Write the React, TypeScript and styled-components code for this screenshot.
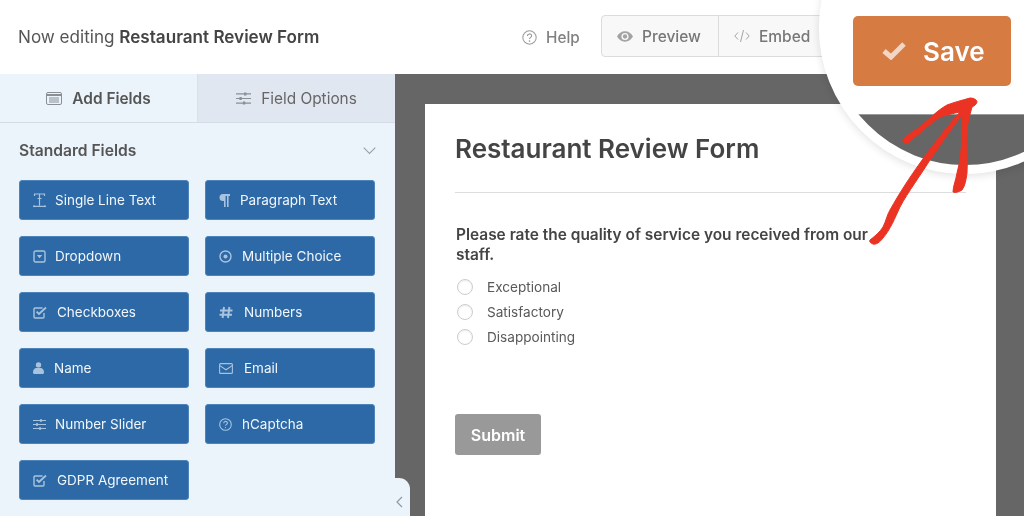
import React from 'react';
import styled, { createGlobalStyle } from 'styled-components';

const Global = createGlobalStyle`
  html, body { margin: 0; padding: 0; background: #fff; }
  body { font-family: Inter, "Liberation Sans", sans-serif; overflow: hidden; }
  * { box-sizing: border-box; }
`;

const Page = styled.div`
  position: relative;
  width: 1024px;
  height: 516px;
  overflow: hidden;
  display: flex;
  flex-direction: column;
  filter: blur(0.35px);
`;
const Header = styled.header`
  height: 74px;
  flex: none;
  background: #fff;
  display: flex;
  align-items: center;
  padding: 0 0 0 18px;
`;
const Title = styled.div`
  font-size: 17.1px;
  color: #555;
  flex: none;
  width: 504px;
  position: relative;
  top: -1px;
  b { font-weight: 600; color: #444; }
`;
const Help = styled.div`
  display: flex;
  align-items: center;
  gap: 9px;
  width: 79px;
  flex: none;
  font-size: 15.3px;
  font-weight: 500;
  color: #808080;
`;
const Segments = styled.div`
  display: flex;
  height: 42px;
  width: 260px;
  flex: none;
  border: 1px solid #dcdcdc;
  border-radius: 4px;
  background: #f8f8f8;
  position: relative;
  top: -1px;
`;
const Segment = styled.div<{ $w: number }>`
  width: ${p => p.$w}px;
  display: flex;
  align-items: center;
  gap: 9px;
  padding-left: 15px;
  font-size: 15.5px;
  font-weight: 500;
  color: #777;
  & + & { border-left: 1px solid #dcdcdc; }
`;
const Body = styled.div`
  flex: 1;
  display: flex;
  min-height: 0;
`;
const Sidebar = styled.aside`
  width: 395px;
  flex: none;
  background: #ebf3fb;
  display: flex;
  flex-direction: column;
`;
const Tabs = styled.div`
  display: flex;
  height: 49px;
  flex: none;
  border-bottom: 1px solid #d5dce6;
`;
const Tab = styled.div<{ $active?: boolean }>`
  flex: 1;
  display: flex;
  align-items: center;
  justify-content: center;
  gap: 10px;
  font-size: 15.4px;
  font-weight: ${p => (p.$active ? 600 : 400)};
  color: ${p => (p.$active ? '#555' : '#666')};
  background: ${p => (p.$active ? '#ebf3fb' : '#e1e7f0')};
  border-left: ${p => (p.$active ? 'none' : '1px solid #d9e0ea')};
`;
const SectionHead = styled.div`
  height: 57px;
  flex: none;
  display: flex;
  align-items: center;
  justify-content: space-between;
  padding: 0 19px 2px 19px;
  font-size: 15.6px;
  font-weight: 600;
  color: #555;
`;
const FieldGrid = styled.div`
  display: grid;
  grid-template-columns: 170px 170px;
  grid-auto-rows: 40px;
  gap: 16px;
  padding-left: 19px;
`;
const FieldButton = styled.div<{ $start: number }>`
  display: flex;
  align-items: center;
  padding-left: 13px;
  background: #2c69a6;
  border: 1px solid #4f84ba;
  border-radius: 3px;
  color: #f1f6fb;
  font-size: 13.5px;
  span.ic {
    width: ${p => p.$start - 14}px;
    flex: none;
    display: flex;
    align-items: center;
    color: #a9c3de;
  }
`;
const Canvas = styled.main`
  flex: 1;
  background: #666;
  padding: 30px 28px 0 30px;
  min-width: 0;
`;
const Form = styled.div`
  height: 100%;
  background: #fff;
  padding-left: 30px;
  display: flex;
  flex-direction: column;
`;
const FormTitle = styled.h1`
  margin: 0;
  height: 89px;
  flex: none;
  width: 511px;
  display: flex;
  align-items: center;
  font-size: 26px;
  font-weight: 600;
  color: #444;
  border-bottom: 1px solid #ddd;
`;
const Question = styled.div`
  margin: 32px 0 0 1px;
  width: 425px;
  font-size: 15.45px;
  line-height: 20px;
  font-weight: 600;
  color: #444;
`;
const Choices = styled.div`
  margin: 14px 0 0 2px;
  display: flex;
  flex-direction: column;
  gap: 9px;
`;
const Choice = styled.div`
  height: 16px;
  display: flex;
  align-items: center;
  gap: 14px;
  font-size: 13.6px;
  color: #595959;
`;
const Radio = styled.i`
  width: 16px;
  height: 16px;
  border-radius: 50%;
  background: #fff;
  border: 1px solid #cdcdcd;
  box-shadow: inset 0 1px 2px rgba(0, 0, 0, 0.08);
  flex: none;
`;
const Submit = styled.div`
  margin-top: 69px;
  width: 86px;
  height: 41px;
  display: flex;
  align-items: center;
  justify-content: center;
  background: #999;
  border-radius: 3px;
  color: #fff;
  font-size: 16px;
  font-weight: 600;
`;
const Collapse = styled.div`
  position: absolute;
  left: 395px;
  top: 478px;
  width: 15px;
  height: 38px;
  background: #ebf3fb;
  border-top-right-radius: 11px;
  display: flex;
  align-items: flex-end;
  padding: 0 0 8px 1px;
`;
const Lens = styled.div`
  position: absolute;
  left: 819px;
  top: -118px;
  width: 292px;
  height: 292px;
  border-radius: 50%;
  border: 9px solid #fff;
  background: linear-gradient(#fff 0, #fff 223px, #cfcfcf 223px, #666 224px, #666 100%);
  box-shadow: 0 2px 9px rgba(0, 0, 0, 0.12);
`;
const SaveButton = styled.div`
  position: absolute;
  left: 853px;
  top: 16px;
  width: 158px;
  height: 70px;
  background: #d67b42;
  border-radius: 5px;
  display: flex;
  align-items: center;
  gap: 17px;
  padding-left: 29px;
  color: #fff;
  font-size: 26px;
  font-weight: 600;
`;
const Arrow = styled.svg`
  position: absolute;
  left: 860px;
  top: 90px;
  pointer-events: none;
`;

const Sl = (p: React.SVGProps<SVGSVGElement>) => (
  <svg fill="none" stroke="currentColor" strokeWidth={1.4} {...p} />
);

const icons: Record<string, React.ReactNode> = {
  text: (
    <Sl width="13" height="15" viewBox="0 0 13 15">
      <path d="M1.500 3V1h10v2M6.500 1v11.500M4.500 5.500h4M1 13.300h11" strokeWidth={1.2} />
      <circle cx="1" cy="13.300" r="1" fill="currentColor" stroke="none" />
      <circle cx="12" cy="13.300" r="1" fill="currentColor" stroke="none" />
    </Sl>
  ),
  para: (
    <svg width="11" height="13" viewBox="0 0 11 13" fill="currentColor">
      <path d="M4 0h7v2H9.600v11H8V2H6.600v11H5V7H4a3.500 3.500 0 0 1 0-7z" />
    </svg>
  ),
  drop: (
    <Sl width="13" height="13" viewBox="0 0 13 13">
      <rect x="1" y="1" width="11" height="11" rx="1.500" />
      <path d="M3.800 5h5.400L6.500 8.200z" fill="currentColor" stroke="none" />
    </Sl>
  ),
  radio: (
    <Sl width="13" height="13" viewBox="0 0 13 13">
      <circle cx="6.500" cy="6.500" r="5.500" />
      <circle cx="6.500" cy="6.500" r="2" fill="currentColor" stroke="none" />
    </Sl>
  ),
  check: (
    <Sl width="14" height="13" viewBox="0 0 14 13">
      <path d="M11 7v4a1 1 0 0 1-1 1H2a1 1 0 0 1-1-1V3a1 1 0 0 1 1-1h7.500" />
      <path d="M3.600 5.600 6 8l7-6.500" strokeWidth={1.8} />
    </Sl>
  ),
  hash: (
    <Sl width="14" height="13" viewBox="0 0 14 13" strokeWidth={2}>
      <path d="M5 1 3.600 12M10.400 1 9 12M1 4.500h12.500M.5 8.800H13" />
    </Sl>
  ),
  user: (
    <svg width="11" height="12" viewBox="0 0 11 12" fill="currentColor">
      <circle cx="5.500" cy="2.900" r="2.700" />
      <path d="M0 10.500C0 7.600 1.600 6 3.300 6h4.400C9.400 6 11 7.600 11 10.500c0 .9-.6 1.500-1.400 1.500H1.400C.6 12 0 11.400 0 10.500z" />
    </svg>
  ),
  mail: (
    <Sl width="14" height="11" viewBox="0 0 14 11" strokeWidth={1.1}>
      <rect x=".6" y=".6" width="12.800" height="9.800" rx="1" />
      <path d="M.8 2.600 7 6.800l6.200-4.200" />
    </Sl>
  ),
  slider: (
    <Sl width="13" height="11" viewBox="0 0 13 11" strokeWidth={1.1}>
      <path d="M0 1.500h13M0 5.500h13M0 9.500h13" />
      <path d="M8 .2v2.600M4 4.200v2.600M7 8.200v2.600" strokeWidth={2} />
    </Sl>
  ),
  help: (
    <Sl width="13" height="13" viewBox="0 0 13 13" strokeWidth={1.1}>
      <circle cx="6.500" cy="6.500" r="5.800" />
      <path d="M4.700 5.200c0-2.400 3.700-2.400 3.700-.2 0 1.300-1.900 1.400-1.900 2.800" />
      <circle cx="6.500" cy="9.600" r=".7" fill="currentColor" stroke="none" />
    </Sl>
  ),
};

const fields: [string, string, number][] = [
  ['Single Line Text', 'text', 36],
  ['Paragraph Text', 'para', 35],
  ['Dropdown', 'drop', 36],
  ['Multiple Choice', 'radio', 37],
  ['Checkboxes', 'check', 38],
  ['Numbers', 'hash', 39],
  ['Name', 'user', 35],
  ['Email', 'mail', 39],
  ['Number Slider', 'slider', 36],
  ['hCaptcha', 'help', 37],
  ['GDPR Agreement', 'check', 38],
];

export default function App() {
  return (
    <Page>
      <Global />
      <Header>
        <Title>
          Now editing <b>Restaurant Review Form</b>
        </Title>
        <Help>
          <Sl width="15" height="15" viewBox="0 0 13 13" strokeWidth={0.9} color="#999">
            <circle cx="6.500" cy="6.500" r="5.800" />
            <path d="M4.700 5.200c0-2.400 3.700-2.400 3.700-.2 0 1.300-1.900 1.400-1.900 2.800" />
            <circle cx="6.500" cy="9.600" r=".7" fill="currentColor" stroke="none" />
          </Sl>
          Help
        </Help>
        <Segments>
          <Segment $w={116}>
            <svg width="16" height="11" viewBox="0 0 17 11" fill="#a3a3a3">
              <path d="M8.500 0C4.800 0 1.800 2.200 0 5.500 1.800 8.800 4.800 11 8.500 11s6.700-2.200 8.500-5.500C15.200 2.200 12.200 0 8.500 0zm0 9.300a3.800 3.800 0 1 1 0-7.600 3.800 3.800 0 0 1 0 7.600z" />
              <circle cx="8.500" cy="5.500" r="2.300" />
            </svg>
            Preview
          </Segment>
          <Segment $w={140}>
            <Sl width="16" height="14" viewBox="0 0 16 14" strokeWidth={1} color="#a3a3a3">
              <path d="M4 3.500.8 7 4 10.500M12 3.500 15.200 7 12 10.500M9.500 1 6.500 13" />
            </Sl>
            Embed
          </Segment>
        </Segments>
      </Header>
      <Body>
        <Sidebar>
          <Tabs>
            <Tab $active>
              <Sl width="16" height="13" viewBox="0 0 16 13" strokeWidth={1} color="#8a8f96">
                <rect x=".5" y=".5" width="15" height="12" rx="1.500" />
                <path d="M.5 3h15" strokeWidth={2} />
                <path d="M3 6h10M3 8h10M3 10h10" />
              </Sl>
              Add Fields
            </Tab>
            <Tab>
              <Sl width="15" height="13" viewBox="0 0 13 11" strokeWidth={1} color="#8a8f96">
                <path d="M0 1.500h13M0 5.500h13M0 9.500h13" />
                <path d="M8 .2v2.600M4 4.200v2.600M7 8.200v2.600" strokeWidth={2} />
              </Sl>
              Field Options
            </Tab>
          </Tabs>
          <SectionHead>
            Standard Fields
            <Sl width="13" height="8" viewBox="0 0 13 8" strokeWidth={1.1} color="#98a0aa">
              <path d="M.7.7 6.500 6.500 12.300.7" />
            </Sl>
          </SectionHead>
          <FieldGrid>
            {fields.map(([label, icon, start]) => (
              <FieldButton key={label} $start={start}>
                <span className="ic">{icons[icon]}</span>
                {label}
              </FieldButton>
            ))}
          </FieldGrid>
        </Sidebar>
        <Canvas>
          <Form>
            <FormTitle>Restaurant Review Form</FormTitle>
            <Question>Please rate the quality of service you received from our staff.</Question>
            <Choices>
              {['Exceptional', 'Satisfactory', 'Disappointing'].map(c => (
                <Choice key={c}>
                  <Radio />
                  {c}
                </Choice>
              ))}
            </Choices>
            <Submit>Submit</Submit>
          </Form>
        </Canvas>
      </Body>
      <Collapse>
        <Sl width="7" height="12" viewBox="0 0 7 12" strokeWidth={1.2} color="#8d99a8">
          <path d="M6 1 1 6l5 5" />
        </Sl>
      </Collapse>
      <Lens />
      <SaveButton>
        <svg width="24" height="18" viewBox="0 0 24 18" fill="none" stroke="#f3d5c3" strokeWidth={5}>
          <path d="M2 9l7 6L22 2" />
        </svg>
        Save
      </SaveButton>
      <Arrow width="125" height="160" viewBox="860 90 125 160" fill="#ea3323" stroke="#ea3323" strokeWidth={1} strokeLinejoin="round">
        <path d="M903 140C908 134 914 131 920 127C930 118 938 110 947 105C955 102 963 100 970 98C974 98 977 100 977 102C976 105 974 106 972 107C969 118 967 125 967 133C966 146 968 160 967 173C966 180 965 186 962 190C959 192 955 193 953 192C953 186 956 180 957 173C960 162 961 152 962 140C962 132 962 124 962 115C950 130 940 146 930 160C920 176 908 192 900 207C895 218 890 230 883 238C880 242 876 245 873 244C870 243 869 241 870 240C875 236 880 232 883 227C886 221 887 215 890 210C900 192 910 177 920 163C932 146 946 128 960 112C954 113 947 115 940 117C930 124 920 133 908 143C905 144 902 142 903 140Z" />
      </Arrow>
    </Page>
  );
}
